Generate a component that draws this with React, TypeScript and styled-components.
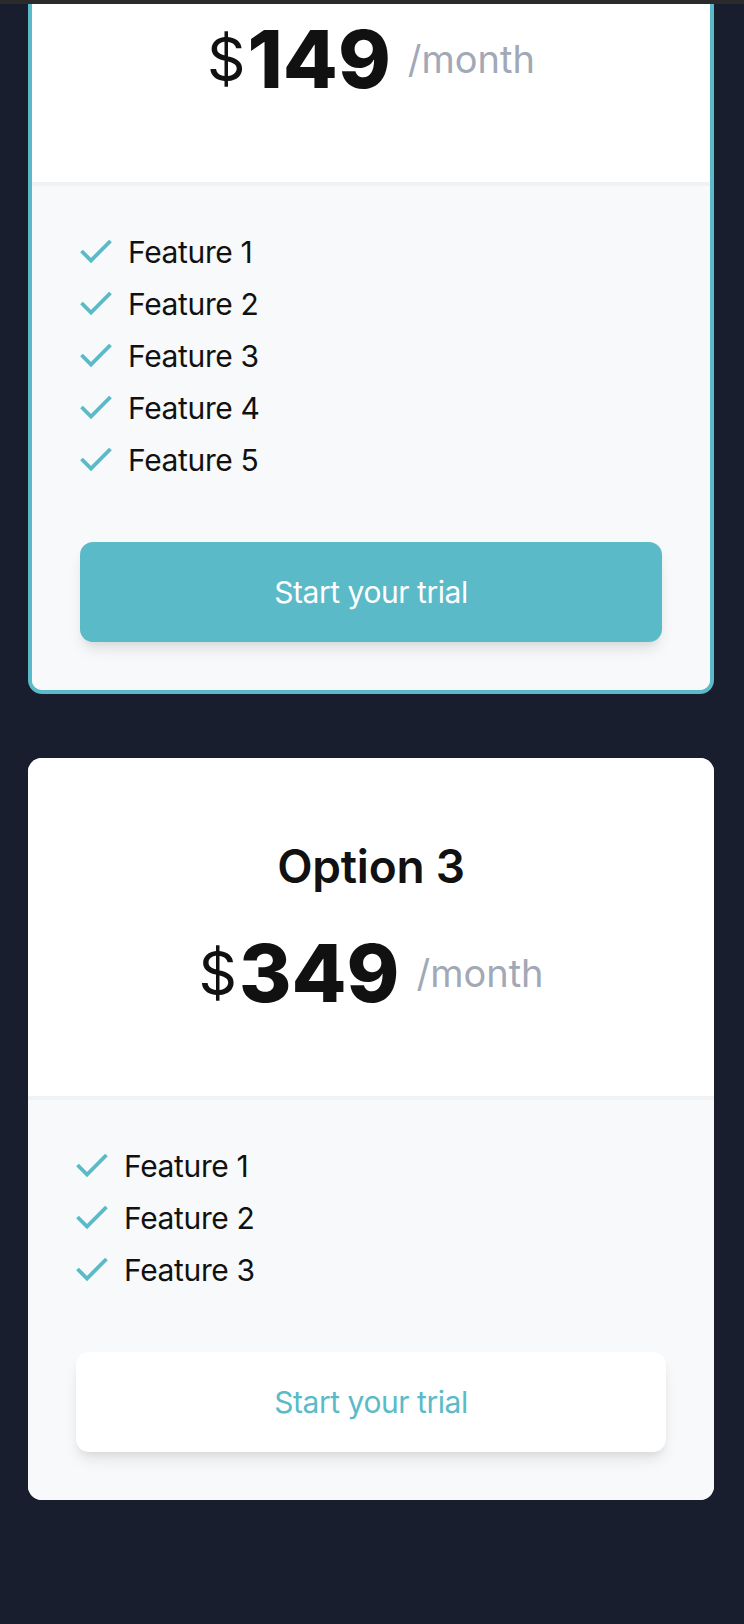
import React from "react";
import styled, { createGlobalStyle, css } from "styled-components";

const TEAL = "#5abac7";

const GlobalStyle = createGlobalStyle`
  html, body {
    margin: 0;
    padding: 0;
    background: #181e2d;
  }
  body {
    font-family: Inter, "Noto Sans", "Liberation Sans", sans-serif;
    -webkit-font-smoothing: antialiased;
  }
  *, *::before, *::after { box-sizing: border-box; }
`;

const TopStrip = styled.div`
  position: fixed;
  top: 0;
  left: 0;
  right: 0;
  height: 4px;
  background: #2a2a2a;
  z-index: 10;
`;

const Page = styled.main`
  display: flex;
  flex-direction: column;
  gap: 64px;
  margin-top: -160px;
  padding: 0 30px 140px 28px;
`;

const Card = styled.section<{ $featured?: boolean }>`
  display: flex;
  flex-direction: column;
  background: #ffffff;
  border-radius: 14px;
  overflow: hidden;
  ${(p) =>
    p.$featured &&
    css`
      border: 4px solid ${TEAL};
    `}
`;

const Header = styled.header`
  display: flex;
  flex-direction: column;
  align-items: center;
  background: #ffffff;
  padding: 80px 48px 83px;
`;

const Title = styled.h2`
  margin: 0;
  font-size: 46px;
  line-height: 56px;
  font-weight: 600;
  letter-spacing: -0.005em;
  color: #111111;
`;

const PriceRow = styled.div`
  margin-top: 39px;
  height: 80px;
  display: flex;
  align-items: center;
  justify-content: center;
  color: #111111;
`;

const Currency = styled.span`
  font-size: 60px;
  line-height: 1;
  font-weight: 400;
  margin-right: 2px;
`;

const Amount = styled.span`
  font-size: 80px;
  line-height: 1;
  font-weight: 800;
`;

const Period = styled.span`
  margin-left: 17px;
  font-size: 38px;
  line-height: 42px;
  font-weight: 400;
  color: #a1a8b6;
`;

const Body = styled.div`
  background: #f8f9fb;
  border-top: 4px solid #f1f2f5;
  padding: 48px;
  display: flex;
  flex-direction: column;
`;

const FeatureList = styled.ul`
  margin: 0;
  padding: 0;
  list-style: none;
  display: flex;
  flex-direction: column;
  gap: 16px;
`;

const FeatureItem = styled.li`
  display: flex;
  align-items: center;
  gap: 16px;
  font-size: 30px;
  line-height: 36px;
  letter-spacing: -0.012em;
  color: #111111;
`;

const CheckIcon = styled.svg`
  flex: none;
  width: 32px;
  height: 24px;
`;

const TrialButton = styled.button<{ $primary?: boolean }>`
  margin-top: 64px;
  height: 100px;
  width: 100%;
  border: none;
  border-radius: 13px;
  font-family: inherit;
  font-size: 30px;
  line-height: 36px;
  font-weight: 400;
  letter-spacing: -0.015em;
  cursor: pointer;
  box-shadow: 0 10px 15px -3px rgba(0, 0, 0, 0.1),
    0 4px 6px -2px rgba(0, 0, 0, 0.05);
  ${(p) =>
    p.$primary
      ? css`
          background: ${TEAL};
          color: #ffffff;
        `
      : css`
          background: #ffffff;
          color: ${TEAL};
        `}
`;

const Check = () => (
  <CheckIcon viewBox="0 0 32 24" fill="none" aria-hidden="true">
    <polyline
      points="1.5,11 11,20.5 30.5,1"
      stroke={TEAL}
      strokeWidth="3.8"
      strokeLinejoin="miter"
      strokeLinecap="butt"
    />
  </CheckIcon>
);

type Plan = {
  name: string;
  price: string;
  features: number;
  featured?: boolean;
};

const plans: Plan[] = [
  { name: "Option 2", price: "149", features: 5, featured: true },
  { name: "Option 3", price: "349", features: 3 },
];

export default function App() {
  return (
    <>
      <GlobalStyle />
      <TopStrip />
      <Page>
        {plans.map((plan) => (
          <Card key={plan.name} $featured={plan.featured}>
            <Header>
              <Title>{plan.name}</Title>
              <PriceRow>
                <Currency>$</Currency>
                <Amount>{plan.price}</Amount>
                <Period>/month</Period>
              </PriceRow>
            </Header>
            <Body>
              <FeatureList>
                {Array.from({ length: plan.features }, (_, i) => (
                  <FeatureItem key={i}>
                    <Check />
                    <span>Feature {i + 1}</span>
                  </FeatureItem>
                ))}
              </FeatureList>
              <TrialButton $primary={plan.featured}>Start your trial</TrialButton>
            </Body>
          </Card>
        ))}
      </Page>
    </>
  );
}
